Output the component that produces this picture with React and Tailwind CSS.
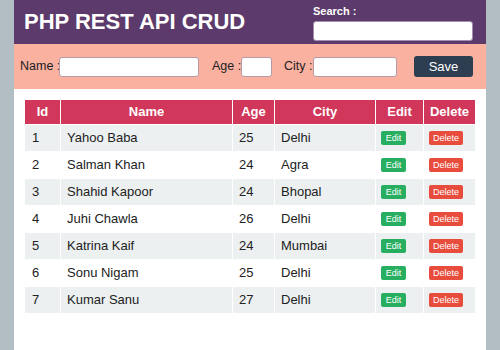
import React from "react";

const rows = [
  [1, "Yahoo Baba", 25, "Delhi"],
  [2, "Salman Khan", 24, "Agra"],
  [3, "Shahid Kapoor", 24, "Bhopal"],
  [4, "Juhi Chawla", 26, "Delhi"],
  [5, "Katrina Kaif", 24, "Mumbai"],
  [6, "Sonu Nigam", 25, "Delhi"],
  [7, "Kumar Sanu", 27, "Delhi"],
];

export default function App() {
  return (
    <div className="min-h-[350px] bg-[#b2bec3] font-['Liberation_Sans',Arial,sans-serif] text-[#222]">
      <div className="mx-auto w-[472px] min-h-[350px] bg-white">
        <div className="flex h-[44px] items-center justify-between bg-[#5c3a6b] pl-[10px] pr-[13px]">
          <h1 className="text-[22px] font-bold leading-none text-white">PHP REST API CRUD</h1>
          <div className="flex flex-col pt-[1px]">
            <label className="text-[11px] font-bold leading-[13px] text-white">Search :</label>
            <input className="mt-[3px] h-[20px] w-[160px] rounded-[3px] border border-[#a58fb0] bg-white" />
          </div>
        </div>
        <div className="flex h-[45px] items-center whitespace-nowrap bg-[#fab1a0] pl-[6px] text-[12.5px]">
          <span className="w-[39px] shrink-0">Name :</span>
          <input className="h-[20px] w-[140px] shrink-0 rounded-[3px] border border-[#b59aa8] bg-white" />
          <span className="ml-[13px] w-[29px] shrink-0">Age :</span>
          <input className="h-[20px] w-[31px] shrink-0 rounded-[3px] border border-[#b59aa8] bg-white" />
          <span className="ml-[12px] w-[29px] shrink-0">City :</span>
          <input className="h-[20px] w-[84px] shrink-0 rounded-[3px] border border-[#b59aa8] bg-white" />
          <button className="ml-[17px] h-[21px] w-[59px] shrink-0 rounded-[3px] bg-[#2c3e50] text-[13px] text-white">Save</button>
        </div>
        <div className="px-[10px] pt-[10px]">
          <table className="w-[452px] table-fixed border-separate border-spacing-[1px] text-[13px]">
            <thead>
              <tr className="h-[24px] bg-[#d1375a] text-white">
                <th className="w-[35px] font-bold">Id</th>
                <th className="w-[171px] font-bold">Name</th>
                <th className="w-[41px] font-bold">Age</th>
                <th className="w-[100px] font-bold">City</th>
                <th className="w-[47px] font-bold">Edit</th>
                <th className="font-bold">Delete</th>
              </tr>
            </thead>
            <tbody>
              {rows.map((r, i) => (
                <tr key={r[0]} className={`h-[26px] ${i % 2 === 0 ? "bg-[#ecf0f1]" : "bg-white"}`}>
                  <td className="pl-[7px]">{r[0]}</td>
                  <td className="pl-[6px]">{r[1]}</td>
                  <td className="pl-[6px]">{r[2]}</td>
                  <td className="pl-[6px]">{r[3]}</td>
                  <td className="pl-[5px]">
                    <button className="block h-[14px] w-[25px] rounded-[2px] bg-[#27ae60] text-[9px] leading-none text-white">Edit</button>
                  </td>
                  <td className="pl-[5px]">
                    <button className="block h-[14px] w-[34px] rounded-[2px] bg-[#e74c3c] text-[9px] leading-none text-white">Delete</button>
                  </td>
                </tr>
              ))}
            </tbody>
          </table>
        </div>
      </div>
    </div>
  );
}
